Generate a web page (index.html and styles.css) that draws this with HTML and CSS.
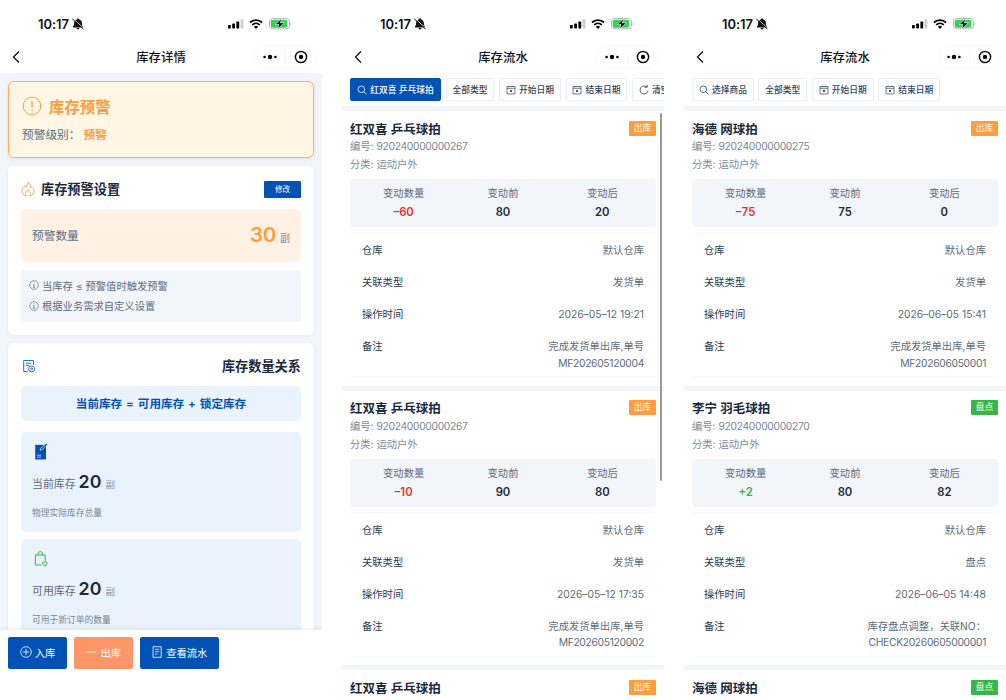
FILE: index.html
```html
<!DOCTYPE html>
<html lang="zh-CN">
<head>
  <meta charset="utf-8">
  <title>库存管理</title>
  <link rel="stylesheet" href="styles.css">
</head>
<body>

<!-- Shared icons -->
<svg class="sprite" width="0" height="0">
  <symbol id="bell" viewBox="0 0 12 12">
    <path d="M6 .6c.8 0 1.200.4 1.200 1 1.700.4 2.700 1.700 2.700 3.400 0 2 .3 2.800 1.300 3.700v.9H.8v-.9C1.800 7.800 2.100 7 2.100 5c0-1.700 1-3 2.700-3.400 0-.6.4-1 1.200-1zM4.500 10.100h3c-.1.800-.7 1.300-1.500 1.300s-1.400-.5-1.500-1.300z" fill="#111"/>
    <path d="M1.200 .8l10.400 9.200" stroke="#fff" stroke-width=".8"/>
    <path d="M.6 1.200l10.600 9.600" stroke="#111" stroke-width="1" stroke-linecap="round"/>
  </symbol>
  <symbol id="signal" viewBox="0 0 16 10">
    <rect x="0" y="6" width="2.800" height="3.400" rx=".7"/>
    <rect x="4.200" y="4.500" width="2.800" height="4.900" rx=".7"/>
    <rect x="8.400" y="2.500" width="2.800" height="6.900" rx=".7"/>
    <rect x="12.600" y=".3" width="2.800" height="9.100" rx=".7" fill="#ccc"/>
  </symbol>
  <symbol id="wifi" viewBox="0 0 14 10">
    <path d="M1 3.500a8.700 8.700 0 0 1 12 0" fill="none" stroke="#000" stroke-width="1.800"/>
    <path d="M3.200 5.900a5.500 5.500 0 0 1 7.600 0" fill="none" stroke="#000" stroke-width="1.700"/>
    <path d="M4.900 7.700a3 3 0 0 1 4.200 0L7 9.900z"/>
  </symbol>
  <symbol id="battery" viewBox="0 0 23 12">
    <rect x=".5" y=".5" width="20" height="10.400" rx="3.400" fill="#fff" stroke="#b5b5b5"/>
    <rect x="1.700" y="1.700" width="16.600" height="8" rx="2.200" fill="#34d158"/>
    <path d="M21.600 4v3.400c.9-.4.9-3 0-3.400z" fill="#b5b5b5"/>
    <path d="M12.600.6L6.200 6.500h3.800L8.700 11l6.600-6.100h-4z" stroke="#fff" stroke-width=".6"/>
  </symbol>
  <symbol id="back" viewBox="0 0 8 14">
    <path d="M7 1.500L1.500 7 7 12.500" fill="none" stroke="#111" stroke-width="1.300"/>
  </symbol>
  <symbol id="dots" viewBox="0 0 14 6">
    <circle cx="1.600" cy="3" r="1.300"/><circle cx="7" cy="3" r="2.200"/><circle cx="12.400" cy="3" r="1.300"/>
  </symbol>
  <symbol id="target" viewBox="0 0 14 14">
    <circle cx="7" cy="7" r="5.600" fill="none" stroke="#111" stroke-width="1.500"/><circle cx="7" cy="7" r="2.200"/>
  </symbol>
  <symbol id="search" viewBox="0 0 10 10">
    <circle cx="4.300" cy="4.300" r="3.300" fill="none" stroke="currentColor" stroke-width=".8"/>
    <path d="M6.700 6.700l2.600 2.400" stroke="currentColor" stroke-width=".9"/>
  </symbol>
  <symbol id="calendar" viewBox="0 0 10 10">
    <path d="M1 1.500h8v7.400H1zM1 3.300h8M3.200 .8v1.200M6.800 .8v1.200" fill="none" stroke="currentColor" stroke-width=".7"/>
    <path d="M4 5l2 2M6 5L4 7" stroke="currentColor" stroke-width=".9"/>
  </symbol>
  <symbol id="refresh" viewBox="0 0 10 10">
    <path d="M7.800 2A4 4 0 1 0 9 5.600M5.600 2.200h2.600V0" fill="none" stroke="currentColor" stroke-width=".9"/>
  </symbol>
  <symbol id="info" viewBox="0 0 10 10">
    <circle cx="5" cy="5" r="4.300" fill="none" stroke="currentColor" stroke-width=".7"/>
    <path d="M4.200 4.300H5v3M4 7.300h2M5 2.400v.9" fill="none" stroke="currentColor" stroke-width=".7"/>
  </symbol>
</svg>

<!-- Stock detail -->
<div class="screen detail">
  <div class="status-bar">
    <span class="time">10:17</span><svg class="bell"><use href="#bell"/></svg>
    <svg class="signal"><use href="#signal"/></svg><svg class="wifi"><use href="#wifi"/></svg><svg class="battery"><use href="#battery"/></svg>
  </div>
  <div class="nav-bar">
    <svg class="back"><use href="#back"/></svg>
    <span class="nav-title">库存详情</span>
    <div class="capsule"><svg class="dots"><use href="#dots"/></svg><i></i><svg class="target"><use href="#target"/></svg></div>
  </div>

  <div class="detail-body">
    <div class="alert-card">
      <div class="alert-title">
        <svg viewBox="0 0 20 20"><circle cx="10" cy="10" r="8.800" fill="none" stroke="currentColor"/><path d="M10 5v6.800M10 13.600v1.300" stroke="currentColor" stroke-width="1.200"/></svg>
        <span>库存预警</span>
      </div>
      <div class="alert-level">预警级别：<b>预警</b></div>
    </div>

    <div class="card setting-card">
      <div class="card-head">
        <svg class="fire" viewBox="0 0 14 16"><path d="M7 1.200C7.300 3.200 5.200 4.300 4.500 6.400 4 5.800 3.700 5.400 3.600 5 1.900 6.600 1 8.300 1 10c0 2.700 1.700 4.300 3.500 4.800C3.800 13 4.700 11 6.800 8.600c.3 1.300.9 1.800 1.700 2.500 1.100 1 1.300 2.300.8 3.700C11.700 14.200 13 12.500 13 10c0-1.800-.8-3.500-2.200-4.700-.1.700-.4 1.200-.9 1.600C9.700 4.500 8.800 2.500 7 1.200zM4.500 14.800h1.700M8 14.800h1.300"/></svg>
        <h2>库存预警设置</h2>
        <button class="edit-button" type="button">修改</button>
      </div>
      <div class="warn-count"><span>预警数量</span><span><strong>30</strong><small>副</small></span></div>
      <div class="tips">
        <p><svg><use href="#info"/></svg>当库存 ≤ 预警值时触发预警</p>
        <p><svg><use href="#info"/></svg>根据业务需求自定义设置</p>
      </div>
    </div>

    <div class="card relation-card">
      <div class="card-head">
        <svg class="sheet" viewBox="0 0 14 14"><path d="M5.500 12.500H1.700V1.500h9.700v4.600M3.800 4.200h5.500M3.800 6.400h3.500"/><circle cx="9.600" cy="9.900" r="3"/><circle cx="9.600" cy="9.900" r="1"/></svg>
        <h2>库存数量关系</h2>
      </div>
      <div class="formula">当前库存 = 可用库存 + 锁定库存</div>
      <div class="stock">
        <svg class="note" viewBox="0 0 14 16"><path d="M1.200.8H12v14.700H1.200z" fill="#0052b5"/><path d="M3 11.200h4M3 13.200h4M6.200 6.200l.3-1.800 3.800-3.500 1.300 1.300-3.700 3.600z" fill="none" stroke="#eaf2fc" stroke-width=".7"/><path d="M10.600 1.900L13 .1" stroke="#0052b5" stroke-width="1.200"/></svg>
        <div class="stock-line">当前库存<strong>20</strong><small>副</small></div>
        <div class="stock-desc">物理实际库存总量</div>
      </div>
      <div class="stock available">
        <svg class="bag" viewBox="0 0 14 16"><path d="M7.200 14H1.400V4h9.800v5.800M4 4V2.900a2.300 2.300 0 0 1 4.600 0V4"/><path d="M10.800 15.300L8.600 13c-.8-1.600 1-2.900 2.200-1.700 1.200-1.200 3 .1 2.200 1.700z"/></svg>
        <div class="stock-line">可用库存<strong>20</strong><small>副</small></div>
        <div class="stock-desc">可用于新订单的数量</div>
      </div>
    </div>
  </div>

  <div class="footer">
    <button type="button" class="btn-in"><svg viewBox="0 0 12 12"><circle cx="6" cy="6" r="5.300"/><path d="M6 2.800v6.400M2.800 6h6.400"/></svg>入库</button>
    <button type="button" class="btn-out"><svg viewBox="0 0 12 12"><path d="M1 6h10"/></svg>出库</button>
    <button type="button" class="btn-flow"><svg viewBox="0 0 12 12"><path d="M2 .7h8.200v10.600H2zM4 3.300h4.200M4 5.700h4.200M4 8.100h2.400"/></svg>查看流水</button>
  </div>
</div>

<!-- Stock flow, filtered by product -->
<div class="screen flow">
  <div class="status-bar">
    <span class="time">10:17</span><svg class="bell"><use href="#bell"/></svg>
    <svg class="signal"><use href="#signal"/></svg><svg class="wifi"><use href="#wifi"/></svg><svg class="battery"><use href="#battery"/></svg>
  </div>
  <div class="nav-bar">
    <svg class="back"><use href="#back"/></svg>
    <span class="nav-title">库存流水</span>
    <div class="capsule"><svg class="dots"><use href="#dots"/></svg><i></i><svg class="target"><use href="#target"/></svg></div>
  </div>
  <div class="filters">
    <span class="filter active"><svg><use href="#search"/></svg>红双喜 乒乓球拍</span>
    <span class="filter">全部类型</span>
    <span class="filter"><svg><use href="#calendar"/></svg>开始日期</span>
    <span class="filter"><svg><use href="#calendar"/></svg>结束日期</span>
    <span class="filter"><svg><use href="#refresh"/></svg>清空</span>
  </div>
  <div class="scroll-thumb"></div>

  <div class="record">
    <div class="record-head"><h3>红双喜 乒乓球拍</h3><span class="tag">出库</span></div>
    <p>编号: <span class="code">920240000000267</span></p>
    <p>分类: 运动户外</p>
    <div class="change">
      <div>变动数量<b class="minus">–60</b></div>
      <div>变动前<b>80</b></div>
      <div>变动后<b>20</b></div>
    </div>
    <dl>
      <div><dt>仓库</dt><dd>默认仓库</dd></div>
      <div><dt>关联类型</dt><dd>发货单</dd></div>
      <div><dt>操作时间</dt><dd>2026–05–12 19:21</dd></div>
      <div><dt>备注</dt><dd>完成发货单出库,单号<br><span class="code">MF202605120004</span></dd></div>
    </dl>
  </div>
  <div class="record">
    <div class="record-head"><h3>红双喜 乒乓球拍</h3><span class="tag">出库</span></div>
    <p>编号: <span class="code">920240000000267</span></p>
    <p>分类: 运动户外</p>
    <div class="change">
      <div>变动数量<b class="minus">–10</b></div>
      <div>变动前<b>90</b></div>
      <div>变动后<b>80</b></div>
    </div>
    <dl>
      <div><dt>仓库</dt><dd>默认仓库</dd></div>
      <div><dt>关联类型</dt><dd>发货单</dd></div>
      <div><dt>操作时间</dt><dd>2026–05–12 17:35</dd></div>
      <div><dt>备注</dt><dd>完成发货单出库,单号<br><span class="code">MF202605120002</span></dd></div>
    </dl>
  </div>
  <div class="record">
    <div class="record-head"><h3>红双喜 乒乓球拍</h3><span class="tag">出库</span></div>
  </div>
</div>

<!-- Stock flow, all products -->
<div class="screen flow">
  <div class="status-bar">
    <span class="time">10:17</span><svg class="bell"><use href="#bell"/></svg>
    <svg class="signal"><use href="#signal"/></svg><svg class="wifi"><use href="#wifi"/></svg><svg class="battery"><use href="#battery"/></svg>
  </div>
  <div class="nav-bar">
    <svg class="back"><use href="#back"/></svg>
    <span class="nav-title">库存流水</span>
    <div class="capsule"><svg class="dots"><use href="#dots"/></svg><i></i><svg class="target"><use href="#target"/></svg></div>
  </div>
  <div class="filters">
    <span class="filter"><svg><use href="#search"/></svg>选择商品</span>
    <span class="filter">全部类型</span>
    <span class="filter"><svg><use href="#calendar"/></svg>开始日期</span>
    <span class="filter"><svg><use href="#calendar"/></svg>结束日期</span>
  </div>

  <div class="record">
    <div class="record-head"><h3>海德 网球拍</h3><span class="tag">出库</span></div>
    <p>编号: <span class="code">920240000000275</span></p>
    <p>分类: 运动户外</p>
    <div class="change">
      <div>变动数量<b class="minus">–75</b></div>
      <div>变动前<b>75</b></div>
      <div>变动后<b>0</b></div>
    </div>
    <dl>
      <div><dt>仓库</dt><dd>默认仓库</dd></div>
      <div><dt>关联类型</dt><dd>发货单</dd></div>
      <div><dt>操作时间</dt><dd>2026–06–05 15:41</dd></div>
      <div><dt>备注</dt><dd>完成发货单出库,单号<br><span class="code">MF202606050001</span></dd></div>
    </dl>
  </div>
  <div class="record">
    <div class="record-head"><h3>李宁 羽毛球拍</h3><span class="tag check">盘点</span></div>
    <p>编号: <span class="code">920240000000270</span></p>
    <p>分类: 运动户外</p>
    <div class="change">
      <div>变动数量<b class="plus">+2</b></div>
      <div>变动前<b>80</b></div>
      <div>变动后<b>82</b></div>
    </div>
    <dl>
      <div><dt>仓库</dt><dd>默认仓库</dd></div>
      <div><dt>关联类型</dt><dd>盘点</dd></div>
      <div><dt>操作时间</dt><dd>2026–06–05 14:48</dd></div>
      <div><dt>备注</dt><dd>库存盘点调整，关联NO：<br><span class="code">CHECK20260605000001</span></dd></div>
    </dl>
  </div>
  <div class="record">
    <div class="record-head"><h3>海德 网球拍</h3><span class="tag check">盘点</span></div>
  </div>
</div>

</body>
</html>
```
FILE: styles.css
```css
* {
  box-sizing: border-box;
}

body {
  margin: 0;
  width: 1006px;
  height: 700px;
  display: flex;
  gap: 20px;
  overflow: hidden;
  background: #fff;
  color: #1b2a3d;
  font-family: Inter, "Noto Sans CJK SC", sans-serif;
  font-size: 10.3px;
}

h2, h3, p, dl, dd {
  margin: 0;
}

svg {
  display: block;
  flex: none;
}

button {
  border: none;
  padding: 0;
  color: #fff;
  font-family: inherit;
}

.sprite {
  position: absolute;
}

.screen {
  position: relative;
  flex: none;
  width: 322px;
  height: 700px;
  overflow: hidden;
  display: flex;
  flex-direction: column;
  background: #fff;
}

/* Status bar and title bar */
.status-bar {
  flex: none;
  display: flex;
  align-items: center;
  height: 42px;
  padding: 6px 30px 0 38px;
}

.time {
  color: #111;
  font-size: 13px;
  font-weight: 600;
  letter-spacing: -0.05px;
}

.bell {
  width: 12px;
  height: 12px;
  margin: 0 auto 0 3px;
}

.signal {
  width: 16px;
  height: 10px;
}

.wifi {
  width: 14px;
  height: 10px;
  margin: 0 6px 0 5px;
}

.battery {
  width: 23px;
  height: 12px;
}

.nav-bar {
  flex: none;
  display: flex;
  align-items: center;
  height: 31px;
  padding: 0 5px 1px 12px;
}

.back {
  width: 8px;
  height: 14px;
}

.nav-title {
  margin-left: 48px;
  flex: 1;
  text-align: center;
  color: #111;
  font-size: 12.4px;
  font-weight: 500;
}

.capsule {
  display: flex;
  align-items: center;
  justify-content: space-between;
  width: 63px;
  height: 24px;
  padding: 0 8px;
  border: 1px solid #f9f9f9;
  border-radius: 12px;
}

.capsule i {
  width: 1px;
  height: 14px;
  background: #f5f5f5;
}

.dots {
  width: 14px;
  height: 6px;
}

.target {
  width: 14px;
  height: 14px;
}

/* Detail page */
.detail-body {
  flex: 1;
  min-height: 0;
  overflow: hidden;
  display: flex;
  flex-direction: column;
  gap: 8px;
  padding: 8px 8px 0;
  background: #f2f6fb;
}

.alert-card {
  flex: none;
  height: 77px;
  padding: 14px 13px 0;
  border: 1px solid #ffaf5e;
  border-radius: 6px;
  background: #fff6e6;
  box-shadow: 0 1px 4px rgba(0, 0, 0, 0.08);
}

.alert-title {
  display: flex;
  align-items: center;
  gap: 7px;
  height: 20px;
  color: #ff9c3c;
  font-size: 15.4px;
  font-weight: 600;
}

.alert-title svg {
  width: 20px;
  height: 20px;
}

.alert-level {
  margin-top: 11px;
  line-height: 17px;
  color: #5d6b7d;
  font-size: 11.7px;
}

.alert-level b {
  margin-left: 3px;
  color: #ff9c3c;
  font-weight: 600;
}

.card {
  flex: none;
  padding: 0 13px;
  border-radius: 6px;
  background: #fff;
  box-shadow: 0 1px 4px rgba(30, 60, 100, 0.06);
}

.setting-card {
  height: 169px;
}

.card-head {
  display: flex;
  align-items: center;
  height: 43px;
  padding-top: 3px;
}

.card-head h2 {
  padding-bottom: 2px;
  font-size: 13.2px;
  font-weight: 600;
}

.fire {
  width: 14px;
  height: 16px;
  margin: 0 6px 1px 0;
  fill: none;
  stroke: #ffa24a;
  stroke-width: 0.9;
}

.edit-button {
  width: 37px;
  height: 17px;
  margin-left: auto;
  padding-bottom: 1px;
  border-radius: 1px;
  background: #0052b5;
  font-size: 7.6px;
}

.warn-count {
  display: flex;
  justify-content: space-between;
  align-items: center;
  height: 53px;
  padding: 0 11px 2px;
  border-radius: 5px;
  background: #fff2e5;
  color: #5d6b7d;
  font-size: 11.7px;
}

.warn-count strong {
  color: #ff9c3c;
  font-size: 20.500px;
  font-weight: 600;
  letter-spacing: -0.3px;
}

.warn-count small {
  margin-left: 4px;
  color: #7b8898;
  font-size: 10px;
}

.tips {
  height: 52px;
  margin-top: 8px;
  padding: 5px 8px;
  border-radius: 4px;
  background: #f2f6fb;
  color: #5d6b7d;
}

.tips p {
  display: flex;
  align-items: center;
  gap: 3px;
  height: 20.500px;
}

.tips svg {
  width: 10px;
  height: 10px;
}

.relation-card .card-head {
  justify-content: space-between;
}

.sheet {
  width: 14px;
  height: 14px;
  margin-left: 1px;
  fill: none;
  stroke: #2c6fc4;
  stroke-width: 1;
}

.formula {
  height: 35px;
  border-radius: 5px;
  background: #eaf2fc;
  color: #0052b5;
  font-size: 11.6px;
  font-weight: 600;
  line-height: 36px;
  text-align: center;
  word-spacing: 1px;
}

.stock {
  height: 100px;
  margin-top: 10.500px;
  padding: 12px 11px 0;
  border-radius: 5px;
  background: #eaf2fc;
}

.stock + .stock {
  margin-top: 7px;
}

.available {
  border: 1px solid #e9f5f1;
  padding: 11px 10px 0;
}

.note,
.bag {
  width: 14px;
  height: 16px;
  margin-left: 2px;
}

.bag {
  fill: none;
  stroke: #36b54a;
  stroke-width: 1;
}

.stock-line {
  height: 24px;
  margin-top: 10px;
  line-height: 24px;
  color: #5d6b7d;
  font-size: 10.9px;
}

.stock-line strong {
  margin: 0 4px 0 3px;
  color: #1b2a3d;
  font-size: 17.800px;
  font-weight: 600;
}

.stock-line small {
  color: #8592a3;
  font-size: 9.5px;
}

.stock-desc {
  margin-top: 12px;
  line-height: 14px;
  color: #7b8898;
  font-size: 8.75px;
}

.footer {
  position: relative;
  flex: none;
  display: flex;
  gap: 6.500px;
  height: 70px;
  padding: 6.500px 8px 0;
  background: #fff;
  box-shadow: 0 -1px 5px rgba(0, 0, 0, 0.08);
}

.footer button {
  display: flex;
  align-items: center;
  justify-content: center;
  gap: 3px;
  width: 59px;
  height: 32px;
  padding-bottom: 1px;
  border-radius: 2px;
  background: #0052b5;
  font-size: 10.3px;
}

.footer .btn-out {
  width: 59.500px;
  background: #ff9568;
}

.footer .btn-flow {
  width: 79.500px;
}

.footer svg {
  width: 12px;
  height: 12px;
  fill: none;
  stroke: #fff;
  stroke-width: 0.8;
}

/* Flow page */
.filters {
  flex: none;
  display: flex;
  gap: 4.700px;
  height: 33px;
  padding: 5px 0 0 8px;
  overflow: hidden;
}

.filter {
  flex: none;
  display: flex;
  align-items: center;
  gap: 3px;
  height: 23px;
  padding: 0 5.900px;
  border: 1px solid #e9eef5;
  border-radius: 2px;
  color: #33445a;
  font-size: 8.75px;
  font-weight: 500;
  white-space: nowrap;
}

.filter svg {
  width: 10px;
  height: 10px;
}

.filter.active {
  padding: 0 6.200px;
  border-color: #0052b5;
  background: #0052b5;
  color: #fff;
}

.scroll-thumb {
  position: absolute;
  top: 113px;
  right: 2px;
  width: 2.500px;
  height: 368px;
  border-radius: 2px;
  background: #999;
}

.record {
  flex: none;
  height: 279.7px;
  padding: 8.200px 8px 0;
  border-top: 5px solid #f2f6fb;
}

.record-head {
  display: flex;
  justify-content: space-between;
  align-items: center;
  height: 18px;
}

.record-head h3 {
  font-size: 12.5px;
  font-weight: 600;
}

.tag {
  width: 27px;
  height: 15px;
  border-radius: 1px;
  background: #ff9c3c;
  color: #fff;
  font-size: 8.7px;
  line-height: 14.500px;
  text-align: center;
}

.tag.check {
  background: #36b54a;
}

.record p {
  height: 18px;
  line-height: 18.500px;
  color: #7b8898;
}

.code {
  letter-spacing: -0.32px;
}

.change {
  display: grid;
  grid-template-columns: 1fr 1fr 1fr;
  height: 48px;
  margin: 5.900px 0 5.700px;
  padding: 5px 4px 0;
  border-radius: 4px;
  background: #f2f6fb;
  color: #5d6b7d;
  line-height: 18.800px;
  text-align: center;
}

.change b {
  display: block;
  color: #1b2a3d;
  font-size: 11.3px;
  font-weight: 600;
}

.change .minus {
  color: #ee2f2b;
}

.change .plus {
  color: #36b54a;
}

.record dl {
  height: 144.700px;
  padding: 0 12px;
  border-top: 1px solid #f7f9fb;
  border-bottom: 1px solid #f7f9fb;
}

.record dl div {
  display: flex;
  justify-content: space-between;
  padding: 8.100px 0 8px;
  line-height: 16.100px;
}

.record dt {
  color: #2b3b4f;
}

.record dd {
  color: #5d6b7d;
  text-align: right;
}
```
